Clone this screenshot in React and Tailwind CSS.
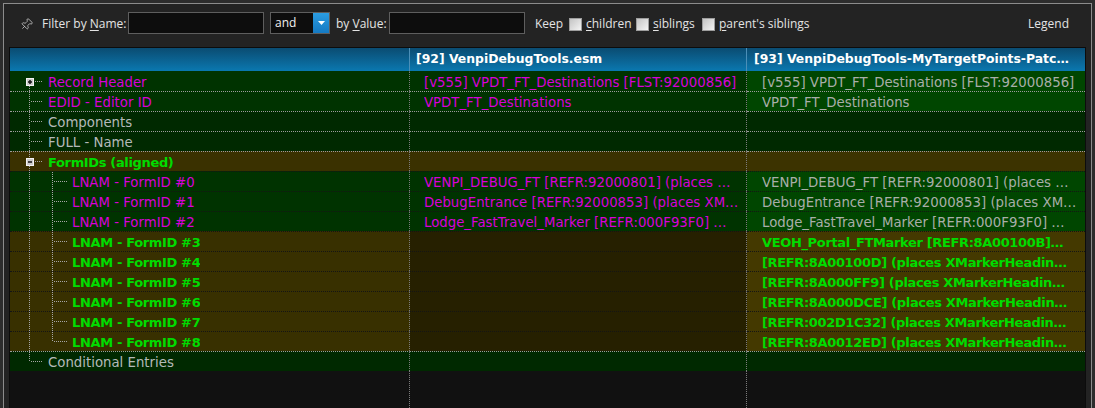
import { Pin } from "lucide-react";

const MAG = "text-[#d800d8]";
const GRAY = "text-[#b4b9b9]";
const GRAY3 = "text-[#a9aea9]";
const GREEN = "text-[#00dc00] font-bold text-[13px] tracking-[-0.35px]";

const GREEN_BG = ["bg-[#003300]", "bg-[#003300]", "bg-[#004600]"];
const DARK_BG = ["bg-[#002900]", "bg-[#002900]", "bg-[#002900]"];
const OLIVE_BG = ["bg-[#383000]", "bg-[#262000]", "bg-[#443900]"];

const places = (ref) => `[REFR:${ref}] (places XMarkerHeadin…`;

const rows = [
  {
    label: "Record Header",
    box: "plus",
    first: true,
    tone: MAG,
    bg: GREEN_BG,
    v2: "[v555] VPDT_FT_Destinations [FLST:92000856]",
    t2: MAG,
    v3: "[v555] VPDT_FT_Destinations [FLST:92000856]",
    t3: GRAY3,
  },
  {
    label: "EDID - Editor ID",
    tone: MAG,
    bg: GREEN_BG,
    v2: "VPDT_FT_Destinations",
    t2: MAG,
    v3: "VPDT_FT_Destinations",
    t3: GRAY3,
  },
  { label: "Components", tone: GRAY, bg: DARK_BG },
  { label: "FULL - Name", tone: GRAY, bg: DARK_BG },
  {
    label: "FormIDs (aligned)",
    box: "minus",
    tone: GREEN,
    bg: ["bg-[#3a3100]", "bg-[#3a3100]", "bg-[#3c3300]"],
  },
  {
    label: "LNAM - FormID #0",
    child: true,
    tone: MAG,
    bg: GREEN_BG,
    v2: "VENPI_DEBUG_FT [REFR:92000801] (places …",
    t2: MAG,
    v3: "VENPI_DEBUG_FT [REFR:92000801] (places …",
    t3: GRAY3,
  },
  {
    label: "LNAM - FormID #1",
    child: true,
    tone: MAG,
    bg: GREEN_BG,
    v2: "DebugEntrance [REFR:92000853] (places XM…",
    t2: MAG,
    v3: "DebugEntrance [REFR:92000853] (places XM…",
    t3: GRAY3,
  },
  {
    label: "LNAM - FormID #2",
    child: true,
    tone: MAG,
    bg: GREEN_BG,
    v2: "Lodge_FastTravel_Marker [REFR:000F93F0] …",
    t2: MAG,
    v3: "Lodge_FastTravel_Marker [REFR:000F93F0] …",
    t3: GRAY3,
  },
  {
    label: "LNAM - FormID #3",
    child: true,
    tone: GREEN,
    bg: OLIVE_BG,
    v3: "VEOH_Portal_FTMarker [REFR:8A00100B]…",
    t3: GREEN,
  },
  { label: "LNAM - FormID #4", child: true, tone: GREEN, bg: OLIVE_BG, v3: places("8A00100D"), t3: GREEN },
  { label: "LNAM - FormID #5", child: true, tone: GREEN, bg: OLIVE_BG, v3: places("8A000FF9"), t3: GREEN },
  { label: "LNAM - FormID #6", child: true, tone: GREEN, bg: OLIVE_BG, v3: places("8A000DCE"), t3: GREEN },
  { label: "LNAM - FormID #7", child: true, tone: GREEN, bg: OLIVE_BG, v3: places("002D1C32"), t3: GREEN },
  {
    label: "LNAM - FormID #8",
    child: true,
    lastChild: true,
    tone: GREEN,
    bg: OLIVE_BG,
    v3: places("8A0012ED"),
    t3: GREEN,
  },
  { label: "Conditional Entries", last: true, tone: GRAY, bg: DARK_BG },
];

const dot = { stroke: "#a6a6a6", strokeDasharray: "1 1" };

function Gutter({ r }) {
  if (r.child) {
    return (
      <svg width="62" height="19" className="shrink-0">
        <line x1="19.5" y1="0" x2="19.5" y2="19" {...dot} />
        <line x1="42.5" y1="0" x2="42.5" y2={r.lastChild ? 10 : 19} {...dot} />
        <line x1="44" y1="9.5" x2="57" y2="9.5" {...dot} />
      </svg>
    );
  }
  return (
    <svg width="38" height="19" className="shrink-0">
      {r.box ? (
        <>
          {!r.first && <line x1="19.5" y1="0" x2="19.5" y2="6" {...dot} />}
          <line x1="19.5" y1="14" x2="19.5" y2="19" {...dot} />
          <rect x="16.5" y="6.5" width="7" height="7" fill="#cbcbcb" stroke="#f4f4f4" />
          <line x1="18" y1="10" x2="22" y2="10" stroke="#161616" strokeWidth="1.5" />
          {r.box === "plus" && (
            <line x1="20" y1="8" x2="20" y2="12" stroke="#161616" strokeWidth="1.5" />
          )}
          <line x1="25" y1="9.5" x2="33" y2="9.5" {...dot} />
        </>
      ) : (
        <>
          <line x1="19.5" y1="0" x2="19.5" y2={r.last ? 10 : 19} {...dot} />
          <line x1="21" y1="9.5" x2="33" y2="9.5" {...dot} />
        </>
      )}
    </svg>
  );
}

function Row({ r }) {
  const top = r.first
    ? "border-t-transparent"
    : r.child
      ? "border-t-[#141414]"
      : "border-t-[#9c9c9c]";
  const cell = `h-[20px] flex items-start overflow-hidden border-t border-dotted ${top}`;
  const text = "truncate leading-[16px] pt-[3px]";
  return (
    <div className="grid grid-cols-[400px_337px_338px] shrink-0">
      <div className={`${cell} border-r border-r-[#7c7c7c] ${r.bg[0]}`}>
        <Gutter r={r} />
        <span className={`${text} ${r.tone}`}>{r.label}</span>
      </div>
      <div className={`${cell} border-r border-r-[#7c7c7c] pl-[14px] pr-[2px] ${r.bg[1]}`}>
        {r.v2 && <span className={`${text} ${r.t2}`}>{r.v2}</span>}
      </div>
      <div className={`${cell} pl-[15px] pr-[2px] ${r.bg[2]}`}>
        {r.v3 && <span className={`${text} ${r.t3}`}>{r.v3}</span>}
      </div>
    </div>
  );
}

function Check() {
  return (
    <span className="mt-[2px] w-[13px] h-[13px] shrink-0 border border-[#9e9e9e] bg-linear-to-br from-[#c4c4c4] to-[#f4f4f4]" />
  );
}

function TextBox({ width }) {
  return <div className={`h-[22px] ${width} shrink-0 border border-[#5e5e5e] bg-[#0d0d0d]`} />;
}

function Toolbar() {
  return (
    <div className="h-[43px] shrink-0 flex items-start pt-[8px] text-[12px] text-[#e4e4e4] font-['Open_Sans',sans-serif]">
      <div className="h-[22px] flex items-center w-full">
        <Pin size={13} strokeWidth={1.5} className="ml-[16px] mt-[2px] w-[13px] shrink-0 rotate-45 text-[#c4c4c4]" />
        <span className="ml-[9px] mt-[2px] w-[86px] shrink-0 whitespace-nowrap">
          Filter by <span className="underline underline-offset-2">N</span>ame:
        </span>
        <TextBox width="w-[136px]" />
        <div className="ml-[6px] h-[22px] w-[60px] shrink-0 border border-[#5e5e5e] bg-[#0d0d0d] flex items-center">
          <span className="pl-[4px] flex-1 text-[#f0f0f0]">and</span>
          <span className="w-[16px] h-[20px] bg-linear-to-b from-[#2b9de2] to-[#1479c2] flex items-center justify-center">
            <svg width="7" height="4" viewBox="0 0 7 4">
              <polygon points="0,0 7,0 3.5,4" fill="#ffffff" />
            </svg>
          </span>
        </div>
        <span className="ml-[6px] mt-[2px] w-[53px] shrink-0 whitespace-nowrap">
          by <span className="underline underline-offset-2">V</span>alue:
        </span>
        <TextBox width="w-[136px]" />
        <span className="ml-[10px] mt-[2px] w-[34px] shrink-0">Keep</span>
        <Check />
        <span className="ml-[4px] mt-[2px] w-[50px] shrink-0">
          <span className="underline underline-offset-2">c</span>hildren
        </span>
        <Check />
        <span className="ml-[4px] mt-[2px] w-[49px] shrink-0">
          <span className="underline underline-offset-2">s</span>iblings
        </span>
        <Check />
        <span className="ml-[4px] mt-[2px] whitespace-nowrap">
          <span className="underline underline-offset-2">p</span>arent's siblings
        </span>
        <span className="ml-auto mr-[22px] mt-[2px]">Legend</span>
      </div>
    </div>
  );
}

export default function App() {
  return (
    <div className="w-[1095px] h-[408px] overflow-hidden bg-[#2d2d2d] pt-[3px] px-[3px]">
      <div className="h-full flex flex-col border-t border-l border-r border-[#8c8c8c] bg-[#232323]">
        <Toolbar />
        <div className="mx-[5px] flex-1 min-h-0 flex flex-col border-t border-l border-r border-[#0c0c0c] bg-[#111111] text-[13.3px] font-['DejaVu_Sans',sans-serif]">
          <div className="grid grid-cols-[400px_337px_338px] h-[23px] shrink-0 bg-linear-to-b from-[#0a4c72] to-[#0a78b0] text-white font-bold text-[12.4px]">
            <div className="border-r border-[#4b8fb8]" />
            <div className="border-r border-[#4b8fb8] pl-[6px] flex items-center overflow-hidden">
              <span className="truncate">[92] VenpiDebugTools.esm</span>
            </div>
            <div className="pl-[7px] pr-[8px] flex items-center overflow-hidden">
              <span className="truncate">[93] VenpiDebugTools-MyTargetPoints-Patc…</span>
            </div>
          </div>
          {rows.map((r) => (
            <Row key={r.label} r={r} />
          ))}
          <div className="grid grid-cols-[400px_337px_338px] flex-1">
            <div className="border-r border-dotted border-[#7c7c7c]" />
            <div className="border-r border-dotted border-[#7c7c7c]" />
            <div />
          </div>
        </div>
      </div>
    </div>
  );
}
